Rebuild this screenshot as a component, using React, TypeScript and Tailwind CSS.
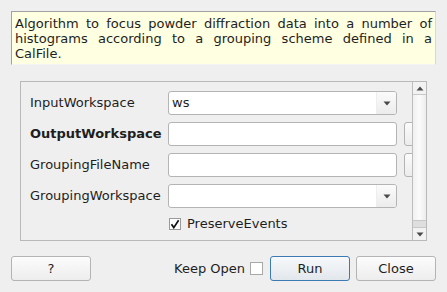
import React from 'react';

function ComboArrow() {
  return (
    <svg width="8" height="5" viewBox="0 0 8 5" className="block">
      <path d="M0.5 0.5 L7.5 0.5 L4 4.5 Z" fill="#4a4a4a" />
    </svg>
  );
}

function Combo({ value }: { value?: string }) {
  return (
    <div className="flex h-[24px] w-[229px] shrink-0 overflow-hidden rounded-[3px] border border-[#b4b4b4] bg-white">
      <div className="flex flex-1 items-center pl-[3px] text-[13px]">{value}</div>
      <div className="flex w-[20px] items-center justify-center border-l border-[#eeeeee] bg-gradient-to-b from-[#fbfbfb] to-[#ececec]">
        <ComboArrow />
      </div>
    </div>
  );
}

function LineEdit() {
  return <div className="h-[24px] w-[229px] shrink-0 rounded-[3px] border border-[#b4b4b4] bg-white" />;
}

function SideButton() {
  return <div className="ml-[7px] h-[24px] w-[30px] shrink-0 rounded-[3px] border border-[#b4b4b4] bg-gradient-to-b from-[#fbfbfb] to-[#ececec]" />;
}

function Row({ label, bold, children }: { label: string; bold?: boolean; children: React.ReactNode }) {
  return (
    <div className="flex h-[24px] items-center">
      <div className={`w-[138px] shrink-0 ${bold ? 'font-bold' : ''}`}>{label}</div>
      {children}
    </div>
  );
}

function Button({ label, primary }: { label: string; primary?: boolean }) {
  return (
    <div
      className={`flex h-[25px] w-[80px] shrink-0 items-center justify-center rounded-[3px] border ${
        primary ? 'border-[#3d7ab3] bg-gradient-to-b from-[#f7f9fb] to-[#e2e7ec]' : 'border-[#b4b4b4] bg-gradient-to-b from-[#fcfcfc] to-[#ededed]'
      }`}
    >
      {label}
    </div>
  );
}

export default function App() {
  return (
    <div className="flex h-[292px] w-[447px] flex-col bg-[#efefef] p-[11px] font-['DejaVu_Sans',sans-serif] text-[13px] text-[#1e1e1e]">
      <div className="h-[54px] shrink-0 border border-t-[#a2a2a2] border-l-[#a2a2a2] border-r-[#d8d8d8] border-b-[#f4f4f4] bg-[#ffffe1] px-[3px] pt-[4px] text-justify leading-[15px]">
        Algorithm to focus powder diffraction data into a number of histograms according to a grouping scheme defined in a CalFile.
      </div>

      <div className="mx-[9px] mt-[16px] flex h-[160px] shrink-0 border border-[#b9b9b9]">
        <div className="flex min-w-0 flex-1 flex-col gap-[7px] overflow-hidden pl-[9px] pt-[9px]">
          <Row label="InputWorkspace">
            <Combo value="ws" />
          </Row>
          <Row label="OutputWorkspace" bold>
            <LineEdit />
            <SideButton />
          </Row>
          <Row label="GroupingFileName">
            <LineEdit />
            <SideButton />
          </Row>
          <Row label="GroupingWorkspace">
            <Combo />
          </Row>
          <div className="flex h-[18px] items-center pl-[139px]">
            <div className="flex h-[12px] w-[12px] items-center justify-center border border-[#9a9a9a] bg-white">
              <svg width="10" height="10" viewBox="0 0 10 10" className="block">
                <path d="M1.5 5.2 L3.8 8.6 L8.6 1.2" fill="none" stroke="#111" strokeWidth="1.7" strokeLinejoin="miter" />
              </svg>
            </div>
            <span className="ml-[6px]">PreserveEvents</span>
          </div>
        </div>

        <div className="flex w-[14px] shrink-0 flex-col border-l border-[#bdbdbd] bg-[#f2f2f2]">
          <div className="flex h-[13px] items-center justify-center border-b border-[#c8c8c8]">
            <svg width="8" height="5" viewBox="0 0 8 5">
              <path d="M0.5 4.5 L7.5 4.5 L4 0.5 Z" fill="#4a4a4a" />
            </svg>
          </div>
          <div className="flex-1 bg-gradient-to-r from-[#f0f0f0] via-[#fbfbfb] to-[#ececec]" />
          <div className="h-[7px] border-t border-[#c8c8c8] bg-[#dedede]" />
          <div className="flex h-[13px] items-center justify-center border-t border-[#c8c8c8]">
            <ComboArrow />
          </div>
        </div>
      </div>

      <div className="mt-[15px] flex h-[25px] shrink-0 items-center">
        <Button label="?" />
        <div className="flex-1" />
        <span>Keep Open</span>
        <div className="ml-[5px] h-[13px] w-[13px] border border-[#a8a8a8] bg-white" />
        <div className="ml-[7px]">
          <Button label="Run" primary />
        </div>
        <div className="ml-[6px]">
          <Button label="Close" />
        </div>
      </div>
    </div>
  );
}
